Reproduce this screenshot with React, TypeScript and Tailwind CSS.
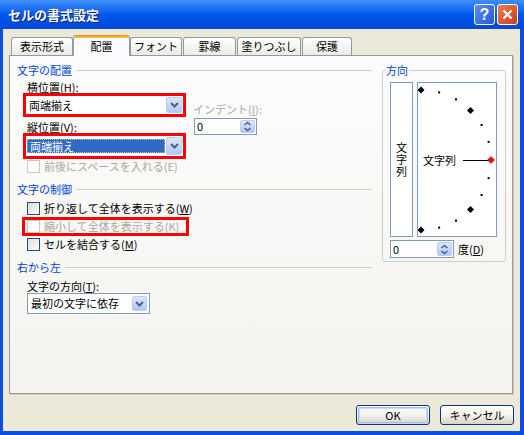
import React from 'react';

// XP-style "セルの書式設定" dialog, 配置 tab

const ComboArrow = ({ className = '' }: { className?: string }) => (
	<div
		className={`flex items-center justify-center rounded-[2px] border border-[#b9cdf7] bg-linear-to-b from-[#dce7fe] to-[#b3c7f5] ${className}`}
	>
		<svg width="9" height="6" viewBox="0 0 9 6">
			<path d="M1 1 L4.5 4.5 L8 1" fill="none" stroke="#4d6185" strokeWidth="2" />
		</svg>
	</div>
);

const SpinButton = () => (
	<div className="w-[15px] m-px flex items-center justify-center rounded-[2px] border border-[#b9cdf7] bg-linear-to-b from-[#dce7fe] to-[#b3c7f5]">
		<svg width="9" height="11" viewBox="0 0 9 11">
			<path d="M1.5 4 L4.5 1.5 L7.5 4" fill="none" stroke="#4d6185" strokeWidth="1.6" />
			<path d="M1.5 7 L4.5 9.5 L7.5 7" fill="none" stroke="#4d6185" strokeWidth="1.6" />
		</svg>
	</div>
);

const Check = ({ disabled }: { disabled?: boolean }) => (
	<span
		className={`w-[13px] h-[13px] shrink-0 border ${
			disabled
				? 'border-[#cac8bb] bg-white'
				: 'border-[#1c5180] bg-linear-to-br from-[#dcdcd7] to-white'
		}`}
	/>
);

const CheckRow = ({
	children,
	disabled,
}: {
	children: React.ReactNode;
	disabled?: boolean;
}) => (
	<div className="flex items-center h-[13px]">
		<Check disabled={disabled} />
		<span className={`ml-[4px] whitespace-nowrap ${disabled ? 'text-[#aca899]' : ''}`}>
			{children}
		</span>
	</div>
);

const Heading = ({ children }: { children: React.ReactNode }) => (
	<div className="flex items-center h-[13px] pl-[7px]">
		<span className="text-[#0046d5] whitespace-nowrap">{children}</span>
		<div className="flex-1 ml-[4px] h-px bg-[#d0d0bf]" />
	</div>
);

const tabs = [
	{ label: '表示形式', w: 'w-[62px]' },
	{ label: '配置', w: 'w-[57px]', active: true },
	{ label: 'フォント', w: 'w-[52px]' },
	{ label: '罫線', w: 'w-[53px] ml-px' },
	{ label: '塗りつぶし', w: 'w-[64px] ml-px' },
	{ label: '保護', w: 'w-[50px] ml-px' },
];

const Dial = () => {
	const cx = 3;
	const cy = 77;
	const r = 70;
	const marks = [-90, -75, -60, -45, -30, -15, 0, 15, 30, 45, 60, 75, 90];
	return (
		<svg width="78" height="153" viewBox="0 0 78 153">
			{marks.map((a) => {
				const x = cx + r * Math.cos((a * Math.PI) / 180);
				const y = cy - r * Math.sin((a * Math.PI) / 180);
				if (a % 45 === 0) {
					const s = 3.5;
					return (
						<polygon
							key={a}
							points={`${x},${y - s} ${x + s},${y} ${x},${y + s} ${x - s},${y}`}
							fill={a === 0 ? '#ff0000' : '#000'}
							stroke={a === 0 ? '#800000' : 'none'}
							strokeWidth="0.5"
						/>
					);
				}
				return <rect key={a} x={x - 1} y={y - 1} width="2" height="2" fill="#000" />;
			})}
			<text x="5" y="81.5" fontSize="11" fill="#000">
				文字列
			</text>
			<line x1="45" y1="77.5" x2="70" y2="77.5" stroke="#000" strokeWidth="1" />
		</svg>
	);
};

const Button = ({ children, primary }: { children: React.ReactNode; primary?: boolean }) => (
	<div className="w-[74px] h-[20px] rounded-[3px] border border-[#003c74] bg-linear-to-b from-white via-[#f4f3ee] to-[#d8d3c6] flex p-px">
		<div
			className={`flex-1 flex items-center justify-center rounded-[2px] ${
				primary ? 'border border-[#a4bcf2] shadow-[inset_0_0_0_1px_#cbd9f8]' : ''
			}`}
		>
			{children}
		</div>
	</div>
);

export default function App() {
	return (
		<div className="w-[524px] h-[435px] flex flex-col bg-[#0a4fe0] overflow-hidden font-['MS_UI_Gothic','Noto_Sans_CJK_JP',sans-serif] text-[11px] leading-[13px] text-black">
			{/* Title bar */}
			<div className="h-[29px] shrink-0 flex items-center pl-[8px] pr-[6px] bg-linear-to-b from-[#3d8ff8] via-[#0058ee] to-[#0349d8]">
				<span className="text-white font-bold text-[13px] [text-shadow:1px_1px_0_#0a1e8a]">
					セルの書式設定
				</span>
				<div className="ml-auto flex gap-[2px]">
					<div className="w-[21px] h-[21px] rounded-[3px] border border-white bg-linear-to-br from-[#5c8df5] to-[#2457d8] flex items-center justify-center text-white font-bold text-[16px] leading-none font-['Liberation_Sans',sans-serif]">
						?
					</div>
					<div className="w-[21px] h-[21px] rounded-[3px] border border-white bg-linear-to-br from-[#ee7a55] to-[#cc3b16] flex items-center justify-center">
						<svg width="11" height="11" viewBox="0 0 11 11">
							<path d="M1.5 1.5 L9.5 9.5 M9.5 1.5 L1.5 9.5" stroke="#fff" strokeWidth="2.2" />
						</svg>
					</div>
				</div>
			</div>

			{/* Dialog body */}
			<div className="flex-1 ml-[3px] mr-[4px] mb-[4px] bg-[#ece9d8] flex flex-col pt-[6px] pl-[6px] pr-[6px]">
				{/* Tabs */}
				<div className="relative z-10 flex items-end h-[21px] pl-[2px]">
					{tabs.map((t) =>
						t.active ? (
							<div
								key={t.label}
								className={`${t.w} h-[21px] flex flex-col border-x border-[#919b9c] rounded-t-[3px] bg-[#fcfcfe] overflow-hidden`}
							>
								<div className="h-[3px] bg-linear-to-b from-[#e68b2c] to-[#ffc73c]" />
								<div className="flex-1 flex items-center justify-center pb-[2px]">{t.label}</div>
							</div>
						) : (
							<div
								key={t.label}
								className={`${t.w} h-[18px] mb-px flex items-center justify-center border border-b-0 border-[#919b9c] rounded-t-[3px] bg-linear-to-b from-white to-[#ecebe5]`}
							>
								{t.label}
							</div>
						),
					)}
				</div>

				{/* Tab page */}
				<div className="-mt-px w-[504px] h-[339px] border border-[#919b9c] bg-linear-to-b from-[#fcfcfe] to-[#f4f3ee] shadow-[1px_1px_0_#d0cdbf] flex">
					{/* Left column */}
					<div className="w-[362px] flex flex-col pt-[8px]">
						<Heading>文字の配置</Heading>

						<div className="flex mt-[4px] pl-[13px]">
							<div className="w-[163px] flex flex-col">
								<div className="pl-[4px] h-[12px] leading-[12px]">横位置(H):</div>
								<div className="h-[24px] border-[3px] border-[#ff0000] bg-white flex">
									<div className="flex-1 pl-[3px] flex items-center">両端揃え</div>
									<ComboArrow className="w-[16px] m-px" />
								</div>
								<div className="pl-[4px] mt-[4px] h-[12px] leading-[12px]">
									縦位置(<span className="underline">V</span>):
								</div>
								<div className="h-[26px] border-[3px] border-[#ff0000] bg-white flex items-center">
									<div className="flex-1 h-[14px] mx-px flex items-center pl-[2px] bg-[#316ac5] text-white border border-dotted border-[#c9c07a]">
										両端揃え
									</div>
									<ComboArrow className="w-[16px] h-[18px] mr-px" />
								</div>
							</div>

							<div className="ml-[7px] mt-[22px] flex flex-col">
								<div className="h-[12px] leading-[12px] text-[#aca899]">
									インデント(<span className="underline">I</span>):
								</div>
								<div className="mt-[3px] ml-px w-[63px] h-[17px] border border-[#7f9db9] bg-white flex">
									<div className="flex-1 pl-[2px] flex items-center">0</div>
									<SpinButton />
								</div>
							</div>
						</div>

						<div className="mt-[1px] pl-[17px]">
							<CheckRow disabled>前後にスペースを入れる(E)</CheckRow>
						</div>

						<div className="mt-[10px]">
							<Heading>文字の制御</Heading>
						</div>
						<div className="mt-[6px] pl-[17px]">
							<CheckRow>
								折り返して全体を表示する(<span className="underline">W</span>)
							</CheckRow>
						</div>
						<div className="mt-[2px] ml-[12px] w-[167px] h-[19px] border-[3px] border-[#ff0000] pl-[2px] flex items-center">
							<CheckRow disabled>縮小して全体を表示する(K)</CheckRow>
						</div>
						<div className="mt-[2px] pl-[17px]">
							<CheckRow>
								セルを結合する(<span className="underline">M</span>)
							</CheckRow>
						</div>

						<div className="mt-[10px]">
							<Heading>右から左</Heading>
						</div>
						<div className="mt-[6px] pl-[17px] h-[12px] leading-[12px]">
							文字の方向(<span className="underline">T</span>):
						</div>
						<div className="mt-[1px] ml-[17px] w-[123px] h-[21px] border border-[#7f9db9] bg-white flex">
							<div className="flex-1 pl-[3px] flex items-center">最初の文字に依存</div>
							<ComboArrow className="w-[15px] m-[2px]" />
						</div>
					</div>

					{/* Orientation group */}
					<fieldset className="ml-[10px] mt-[8px] w-[124px] h-[198px] border border-[#d0d0bf] rounded-[3px]">
						<legend className="ml-[2px] px-px text-[#0046d5] leading-[13px]">方向</legend>
						<div className="mt-[5px] ml-[7px] flex">
							<div className="w-[23px] h-[155px] border border-[#7f9db9] bg-white flex items-center justify-center">
								<span className="[writing-mode:vertical-rl] tracking-[1px] leading-[12px]">文字列</span>
							</div>
							<div className="ml-[4px] w-[80px] h-[155px] border border-[#7f9db9] bg-white">
								<Dial />
							</div>
						</div>
						<div className="mt-[3px] ml-[7px] flex items-center">
							<div className="w-[64px] h-[18px] border border-[#7f9db9] bg-white flex">
								<div className="flex-1 pl-[2px] flex items-center">0</div>
								<SpinButton />
							</div>
							<span className="ml-[4px]">
								度(<span className="underline">D</span>)
							</span>
						</div>
					</fieldset>
				</div>

				{/* Buttons */}
				<div className="flex justify-end gap-[10px] mt-[11px]">
					<Button primary>OK</Button>
					<Button>キャンセル</Button>
				</div>
			</div>
		</div>
	);
}
